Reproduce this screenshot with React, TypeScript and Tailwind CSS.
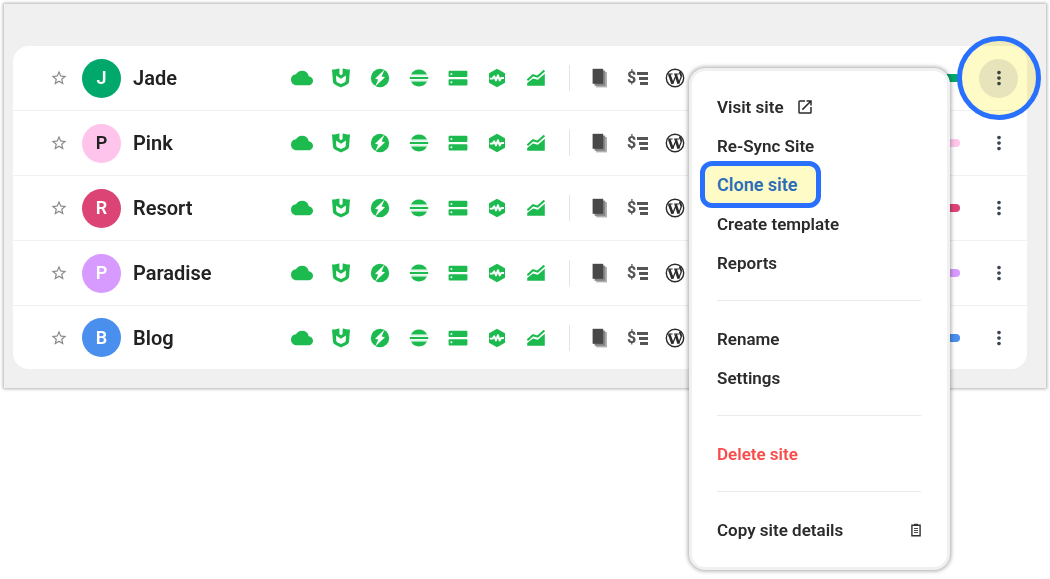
import React from 'react';
import { MdCloud, MdMoreVert, MdOpenInNew, MdStarBorder } from 'react-icons/md';

type Site = {
  name: string;
  avatar: string;
  pill: string;
  highlighted?: boolean;
};

const sites: Site[] = [
  { name: 'Jade', avatar: 'bg-[#00a86b] text-white', pill: 'bg-[#00a86b]', highlighted: true },
  { name: 'Pink', avatar: 'bg-[#ffc4ec] text-[#222222]', pill: 'bg-[#ffc4ec]' },
  { name: 'Resort', avatar: 'bg-[#dc4476] text-white', pill: 'bg-[#dc4476]' },
  { name: 'Paradise', avatar: 'bg-[#d79bff] text-white', pill: 'bg-[#d79bff]' },
  { name: 'Blog', avatar: 'bg-[#4a8eee] text-white', pill: 'bg-[#4a8eee]' },
];

const ShieldIcon = () => (
  <svg viewBox="0 0 20 20" className="size-5">
    <path fill="currentColor" d="M1 1.600C4 1.600 6 1 8.400.6V6L10 7.200 11.600 6V.6C14 1 16 1.600 19 1.600L18 14c-.4 2.400-4.200 3.800-8 5.400C6.200 17.800 2.400 16.400 2 14z" />
    <path fill="#fff" d="M5 7.600l5 3.200 5-3.200-.3 5.400c-.3 1.300-2.600 2.100-4.700 3-2.100-.9-4.400-1.700-4.700-3z" />
  </svg>
);

const BoltIcon = () => (
  <svg viewBox="0 0 20 20" className="size-5">
    <circle cx="10" cy="10" r="9.200" fill="currentColor" />
    <path fill="#fff" d="M14.600 1.600 5 10.800l3.200.8L5.200 18.400 15 9.200l-3.400-.8z" />
  </svg>
);

const LayersIcon = () => (
  <svg viewBox="0 0 20 20" className="size-5" fill="currentColor">
    <path d="M2 6.400a9 9 0 0 1 16 0zM2 13.600a9 9 0 0 0 16 0z" />
    <rect x=".8" y="9" width="18.400" height="2" />
    <path d="M1.200 7.600h17.600v.6H1.200zM1.200 11.800h17.600v.6H1.200z" opacity=".3" />
  </svg>
);

const ServerIcon = () => (
  <svg viewBox="0 0 20 20" className="size-5">
    <rect x=".6" y="2.800" width="18.800" height="6.200" rx="1" fill="currentColor" />
    <rect x=".6" y="11.200" width="18.800" height="6.200" rx="1" fill="currentColor" />
    <circle cx="3.400" cy="5.900" r="1" fill="#fff" />
    <circle cx="3.400" cy="14.300" r="1" fill="#fff" />
  </svg>
);

const HealthIcon = () => (
  <svg viewBox="0 0 20 20" className="size-5">
    <path fill="currentColor" d="M10 .8 18 5.200v9.600l-8 4.400-8-4.400V5.200z" />
    <path fill="none" stroke="#fff" strokeWidth="1.900" strokeLinejoin="round" d="M2.800 10.600h2.800l1.600-2.400 1.800 4.200 2-5.200 1.700 5.200 1.500-2.400h2.800" />
  </svg>
);

const GrowthIcon = () => (
  <svg viewBox="0 0 20 20" className="size-5">
    <path fill="none" stroke="currentColor" strokeWidth="2" d="M1.400 12.200 7 7.200l4.600 1.400L18.400 2.400" />
    <path fill="currentColor" d="M1.200 17.800v-2.800L7 10.400l4.800 1.400 7-6v12z" />
  </svg>
);

const PagesIcon = () => (
  <svg viewBox="0 0 20 20" className="size-5">
    <rect x="6.200" y="4" width="10.800" height="15.400" fill="#b0b0b0" />
    <rect x="4.600" y="2.600" width="10.600" height="15.200" fill="#858585" />
    <rect x="2.600" y=".8" width="10.600" height="15" fill="#484848" />
  </svg>
);

const PricingIcon = () => (
  <span className="flex items-center gap-px text-[#555555]">
    <span className="text-base leading-5 font-extrabold">$</span>
    <svg viewBox="0 0 11 14" className="h-[14px] w-[11px]" fill="none" stroke="currentColor" strokeWidth="2.800">
      <path d="M0 2.500h11M2 7.500h9M3 12.500h8" />
    </svg>
  </span>
);

const WordPressIcon = () => (
  <svg viewBox="0 0 20 20" className="size-5" fill="none" stroke="#2b2b2b">
    <circle cx="10" cy="10" r="8.700" strokeWidth="1.400" />
    <path strokeWidth="1.200" d="M2.600 6h5M9 6h5" />
    <path strokeWidth="2.600" d="M4.200 6.200 7.600 15.800M10.600 6.200l3 9.400" />
    <path strokeWidth="1.300" d="M7.600 15.800 10.800 8M13.600 15.600 16.400 8.600" />
    <path strokeWidth="2" d="M15 3.800c-.6 1.800 1.800 2.600 1.300 5" />
  </svg>
);

const ClipboardIcon = () => (
  <svg viewBox="0 0 10 14" className="h-[14px] w-[10px]" fill="none" stroke="#333333">
    <path strokeWidth="1.400" d="M.9 2.200h8.200v10.600H.9z" />
    <path strokeWidth="2" d="M3 1.800h4" />
    <path strokeWidth=".9" d="M3 5.500h4M3 7.500h4M3 9.500h4" />
  </svg>
);

const statusIcons = [
  { label: 'Cloud', icon: <MdCloud className="size-[22px]" /> },
  { label: 'Security', icon: <ShieldIcon /> },
  { label: 'Performance', icon: <BoltIcon /> },
  { label: 'Cache', icon: <LayersIcon /> },
  { label: 'Backups', icon: <ServerIcon /> },
  { label: 'Uptime', icon: <HealthIcon /> },
  { label: 'Analytics', icon: <GrowthIcon /> },
];

const menuItem = 'flex h-[39px] w-full items-center text-left';

const Divider = () => <hr className="my-[18px] h-px border-0 bg-[#ebebeb]" />;

const SiteMenu: React.FC = () => (
  <div
    role="menu"
    className="absolute top-[22px] right-[77px] z-20 w-[261px] rounded-2xl border-[3px] border-[#f0f0f0] bg-white pt-4 pr-[26px] pb-[18px] pl-[25px] text-[17px] leading-6 font-semibold text-[#2b2b2b] shadow-[0_0_4px_1px_rgba(0,0,0,0.35)]"
  >
    <a href="#visit" role="menuitem" className={menuItem}>
      Visit site
      <MdOpenInNew className="ml-3 size-[18px]" />
    </a>
    <button role="menuitem" className={menuItem}>Re-Sync Site</button>
    <button role="menuitem" className={`${menuItem} relative text-lg text-[#2a6db8]`}>
      <span className="absolute -inset-y-1 -left-[17px] w-[121px] rounded-xl border-[5px] border-[#2970ff] bg-[#fffbc6]" />
      <span className="relative">Clone site</span>
    </button>
    <button role="menuitem" className={menuItem}>Create template</button>
    <button role="menuitem" className={menuItem}>Reports</button>
    <Divider />
    <button role="menuitem" className={menuItem}>Rename</button>
    <button role="menuitem" className={menuItem}>Settings</button>
    <Divider />
    <button role="menuitem" className={`${menuItem} text-[#fa4b4b]`}>Delete site</button>
    <Divider />
    <button role="menuitem" className={`${menuItem} justify-between`}>
      Copy site details
      <ClipboardIcon />
    </button>
  </div>
);

const SiteRow: React.FC<{ site: Site }> = ({ site }) => (
  <li className="relative flex h-[65px] items-center border-b border-[#f0f0f0] pr-[9px] pl-[37px] last:h-[63px] last:border-b-0">
    <button aria-label={`Favorite ${site.name}`} className="mr-[14px] text-[#8a8a8a]">
      <MdStarBorder className="size-[18px]" />
    </button>
    <span className={`flex size-[39px] items-center justify-center rounded-full text-lg font-semibold ${site.avatar}`}>
      {site.name[0]}
    </span>
    <h2 className="ml-3 w-[149px] text-xl font-semibold text-[#222222]">{site.name}</h2>

    <div className="flex items-center text-[#1dbb4f]">
      {statusIcons.map(({ label, icon }) => (
        <span key={label} title={label} className="flex w-[39px] justify-center">
          {icon}
        </span>
      ))}
    </div>
    <span className="mr-5 ml-[14px] h-[26px] w-px bg-[#e4e4e4]" />
    <div className="flex items-center gap-[17px]">
      <PagesIcon />
      <PricingIcon />
      <WordPressIcon />
    </div>

    <span className={`ml-auto h-2 w-16 rounded-full ${site.pill}`} />
    <button
      aria-label={`More options for ${site.name}`}
      className={`ml-[19px] flex size-[39px] items-center justify-center rounded-full text-[#3b4450] ${site.highlighted ? 'bg-[#e7e7f0]' : ''}`}
    >
      <MdMoreVert className="size-[22px]" />
    </button>

    {site.highlighted && (
      <>
        <span className="pointer-events-none absolute -top-[10px] -right-[14px] z-10 size-[84px] rounded-full bg-[#fffbc6] mix-blend-multiply" />
        <span className="pointer-events-none absolute -top-[10px] -right-[14px] z-10 size-[84px] rounded-full border-[5px] border-[#2970ff]" />
        <SiteMenu />
      </>
    )}
  </li>
);

const App: React.FC = () => (
  <main className="min-h-screen bg-white p-1 font-['Roboto',sans-serif]">
    <section className="bg-[#f0f0f0] pt-[42px] pr-[19px] pb-[19px] pl-[9px] shadow-[0_0_3px_1px_rgba(0,0,0,0.3)]">
      <ul className="rounded-2xl bg-white">
        {sites.map((site) => (
          <SiteRow key={site.name} site={site} />
        ))}
      </ul>
    </section>
  </main>
);

export default App;
